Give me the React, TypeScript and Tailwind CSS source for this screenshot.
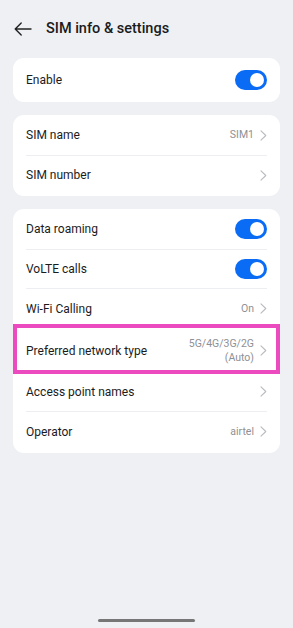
import type { ReactNode } from "react";

function Chevron() {
  return (
    <svg
      className="h-[11px] w-[7px] shrink-0"
      viewBox="0 0 7 11"
      fill="none"
      stroke="#b9bbbf"
      strokeWidth={1.1}
      strokeLinecap="round"
      strokeLinejoin="round"
    >
      <path d="M1 0.8 L5.8 5.5 L1 10.2" />
    </svg>
  );
}

function Toggle() {
  return (
    <div className="flex h-[20px] w-[32px] items-center justify-end rounded-full bg-[#0a6cf5] pr-[3px]">
      <div className="h-[14px] w-[14px] rounded-full bg-white" />
    </div>
  );
}

function Row({
  label,
  right,
  divider = false,
  tall = false,
}: {
  label: string;
  right?: ReactNode;
  divider?: boolean;
  tall?: boolean;
}) {
  return (
    <div className="px-[13px]">
      <div
        className={`flex items-center justify-between ${
          tall ? "h-[44px]" : "h-[39.5px]"
        } ${divider ? "border-b border-[#eceef1]" : ""}`}
      >
        <span className="text-[12px] text-[#1b1b1d]">{label}</span>
        <div className="flex items-center gap-[6px]">{right}</div>
      </div>
    </div>
  );
}

function Value({ children }: { children: ReactNode }) {
  return (
    <span className="text-right text-[10.5px] leading-[14px] text-[#8e9095]">
      {children}
    </span>
  );
}

export default function App() {
  return (
    <div
      className="flex min-h-[628px] flex-col bg-[#eef0f3]"
      style={{ fontFamily: "Roboto, 'Noto Sans', sans-serif" }}
    >
      {/* Header */}
      <div className="flex h-[56px] items-center gap-[14px] px-[14px] pt-[1px]">
        <svg
          className="h-[14px] w-[18px]"
          viewBox="0 0 18 14"
          fill="none"
          stroke="#222"
          strokeWidth={1.4}
          strokeLinecap="round"
          strokeLinejoin="round"
        >
          <path d="M17 7 H1.2 M7.2 1 L1.2 7 L7.2 13" />
        </svg>
        <h1 className="text-[14.5px] font-medium text-[#1b1b1d]">
          SIM info &amp; settings
        </h1>
      </div>

      <div className="flex flex-col gap-[13px] px-[13px] pt-[2px]">
        <div className="rounded-[11px] bg-white">
          <Row label="Enable" right={<Toggle />} tall />
        </div>

        <div className="rounded-[11px] bg-white py-[1px]">
          <Row
            label="SIM name"
            divider
            right={
              <>
                <Value>SIM1</Value>
                <Chevron />
              </>
            }
          />
          <Row label="SIM number" right={<Chevron />} />
        </div>

        <div className="rounded-[11px] bg-white py-[1px]">
          <Row label="Data roaming" divider right={<Toggle />} />
          <Row label="VoLTE calls" divider right={<Toggle />} />
          <Row
            label="Wi-Fi Calling"
            right={
              <>
                <Value>On</Value>
                <Chevron />
              </>
            }
          />
          <div className="relative">
            <Row
              label="Preferred network type"
              tall
              right={
                <>
                  <Value>
                    5G/4G/3G/2G
                    <br />
                    (Auto)
                  </Value>
                  <Chevron />
                </>
              }
            />
            <div className="pointer-events-none absolute inset-x-0 -top-[5px] -bottom-[1px] border-[4px] border-[#ec4bbf]" />
          </div>
          <Row label="Access point names" divider right={<Chevron />} />
          <Row
            label="Operator"
            right={
              <>
                <Value>airtel</Value>
                <Chevron />
              </>
            }
          />
        </div>
      </div>

      <div className="mt-auto flex justify-center pb-[6px]">
        <div className="h-[3px] w-[97px] rounded-full bg-[#767676]" />
      </div>
    </div>
  );
}
